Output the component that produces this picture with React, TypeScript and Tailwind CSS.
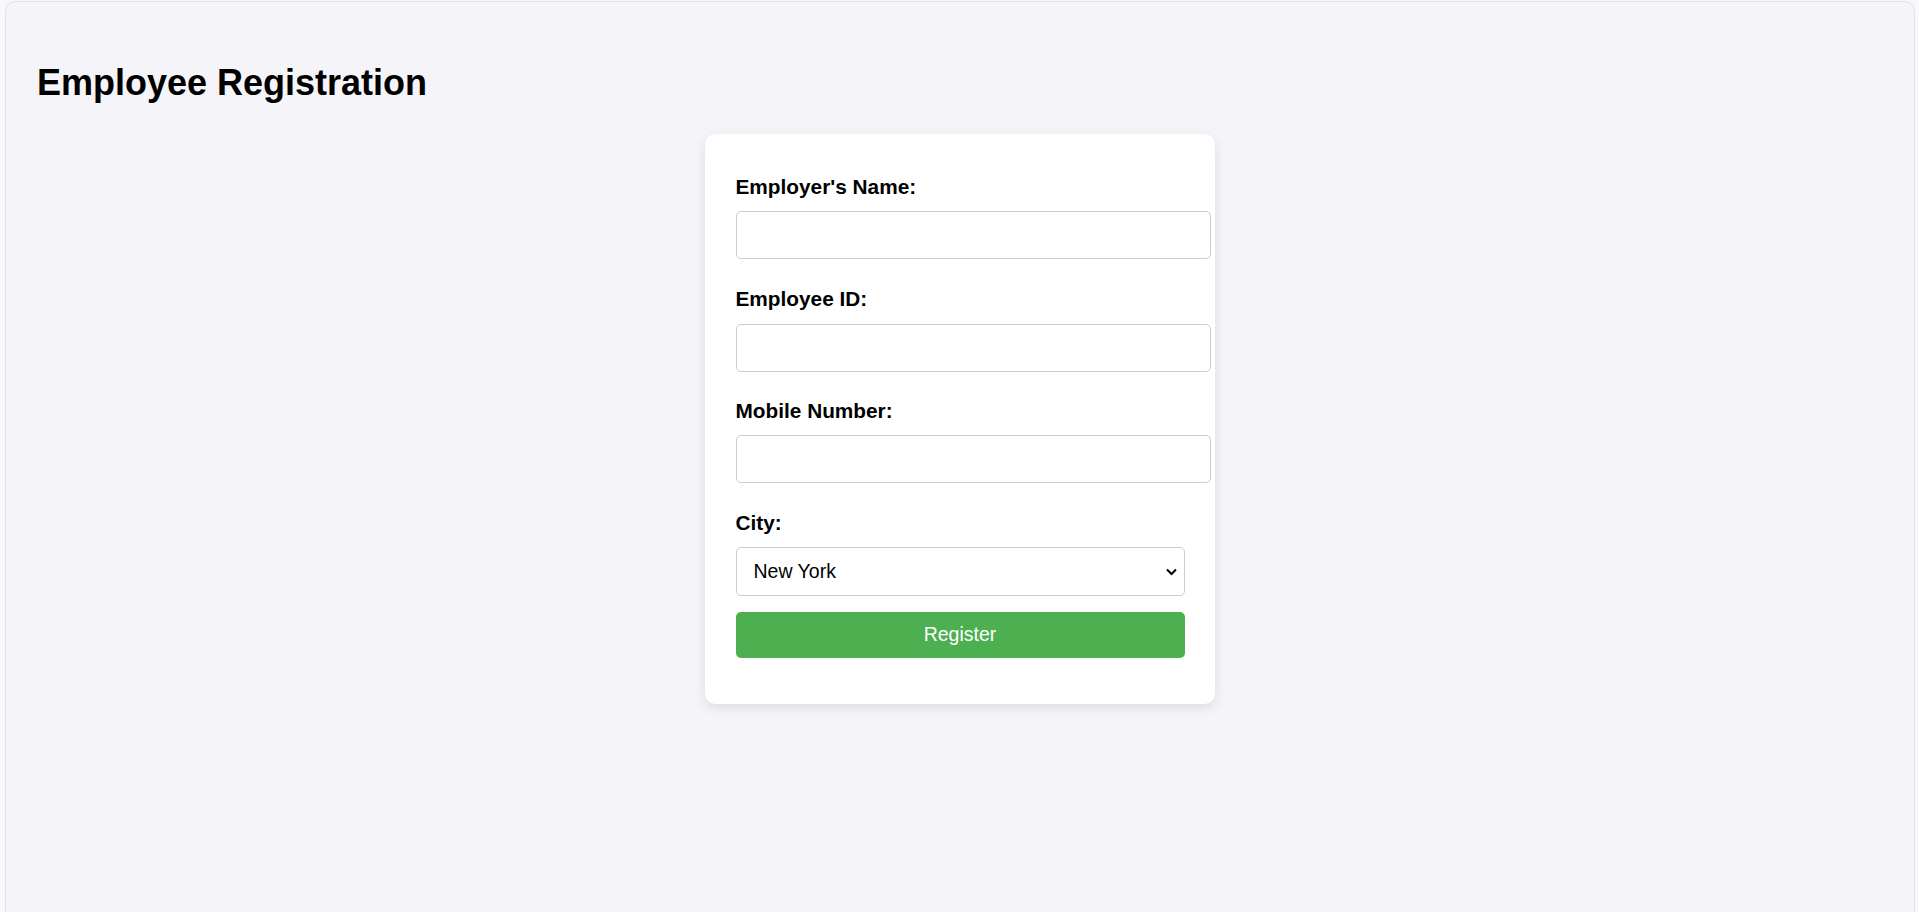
import React, { useState } from 'react';

const cities = ['New York', 'Los Angeles', 'Chicago', 'Houston', 'Phoenix'];

export default function App() {
  const [city, setCity] = useState('New York');

  return (
    <div
      className="min-h-[912px] bg-[#f8f8f8] pl-[5px] pr-[4px] pt-[1px] text-black"
      style={{ fontFamily: '"Liberation Sans", Arial, sans-serif' }}
    >
      <div className="min-h-[911px] rounded-t-[10px] border border-b-0 border-[#e2e2e4] bg-[#f4f4f9] pl-[31px] pr-[31px] pt-[60.5px]">
        {/* Title */}
        <h1 className="text-[36px] font-bold leading-[40px]">Employee Registration</h1>

        {/* Form card */}
        <div className="mt-[31px] flex justify-center">
          <form
            className="w-[510px] rounded-[10px] bg-white px-[30.5px] pt-[41px] pb-[46px] shadow-[0_4px_12px_rgba(0,0,0,0.1)]"
            onSubmit={(e) => e.preventDefault()}
          >
            <label className="block text-[20.8px] font-bold leading-[24px]">Employer's Name:</label>
            <input
              type="text"
              className="mt-[12.5px] mb-[28px] block h-[48px] w-[475px] rounded-[5px] border border-[#cccccc] bg-white px-[12px] text-[19.5px] outline-none"
            />

            <label className="block text-[20.8px] font-bold leading-[24px]">Employee ID:</label>
            <input
              type="text"
              className="mt-[12.5px] mb-[27px] block h-[48px] w-[475px] rounded-[5px] border border-[#cccccc] bg-white px-[12px] text-[19.5px] outline-none"
            />

            <label className="block text-[20.8px] font-bold leading-[24px]">Mobile Number:</label>
            <input
              type="tel"
              className="mt-[12.5px] mb-[27.5px] block h-[48px] w-[475px] rounded-[5px] border border-[#cccccc] bg-white px-[12px] text-[19.5px] outline-none"
            />

            <label className="block text-[20.8px] font-bold leading-[24px]">City:</label>
            <div className="relative mt-[12.5px]">
              <select
                value={city}
                onChange={(e) => setCity(e.target.value)}
                className="block h-[49px] w-full appearance-none rounded-[5px] border border-[#cccccc] bg-white pl-[17px] pr-[36px] text-[19.5px] text-black outline-none"
              >
                {cities.map((c) => (
                  <option key={c}>{c}</option>
                ))}
              </select>
              <svg
                className="pointer-events-none absolute right-[7px] top-[18px] h-[13px] w-[13px]"
                viewBox="0 0 13 13"
                fill="none"
                stroke="black"
                strokeWidth={2}
              >
                <path d="M2 4.5 L6.5 9 L11 4.5" />
              </svg>
            </div>

            <button
              type="submit"
              className="mt-[15.5px] block h-[46px] w-full rounded-[5px] bg-[#4caf50] text-[19.5px] text-white"
            >
              Register
            </button>
          </form>
        </div>
      </div>
    </div>
  );
}
